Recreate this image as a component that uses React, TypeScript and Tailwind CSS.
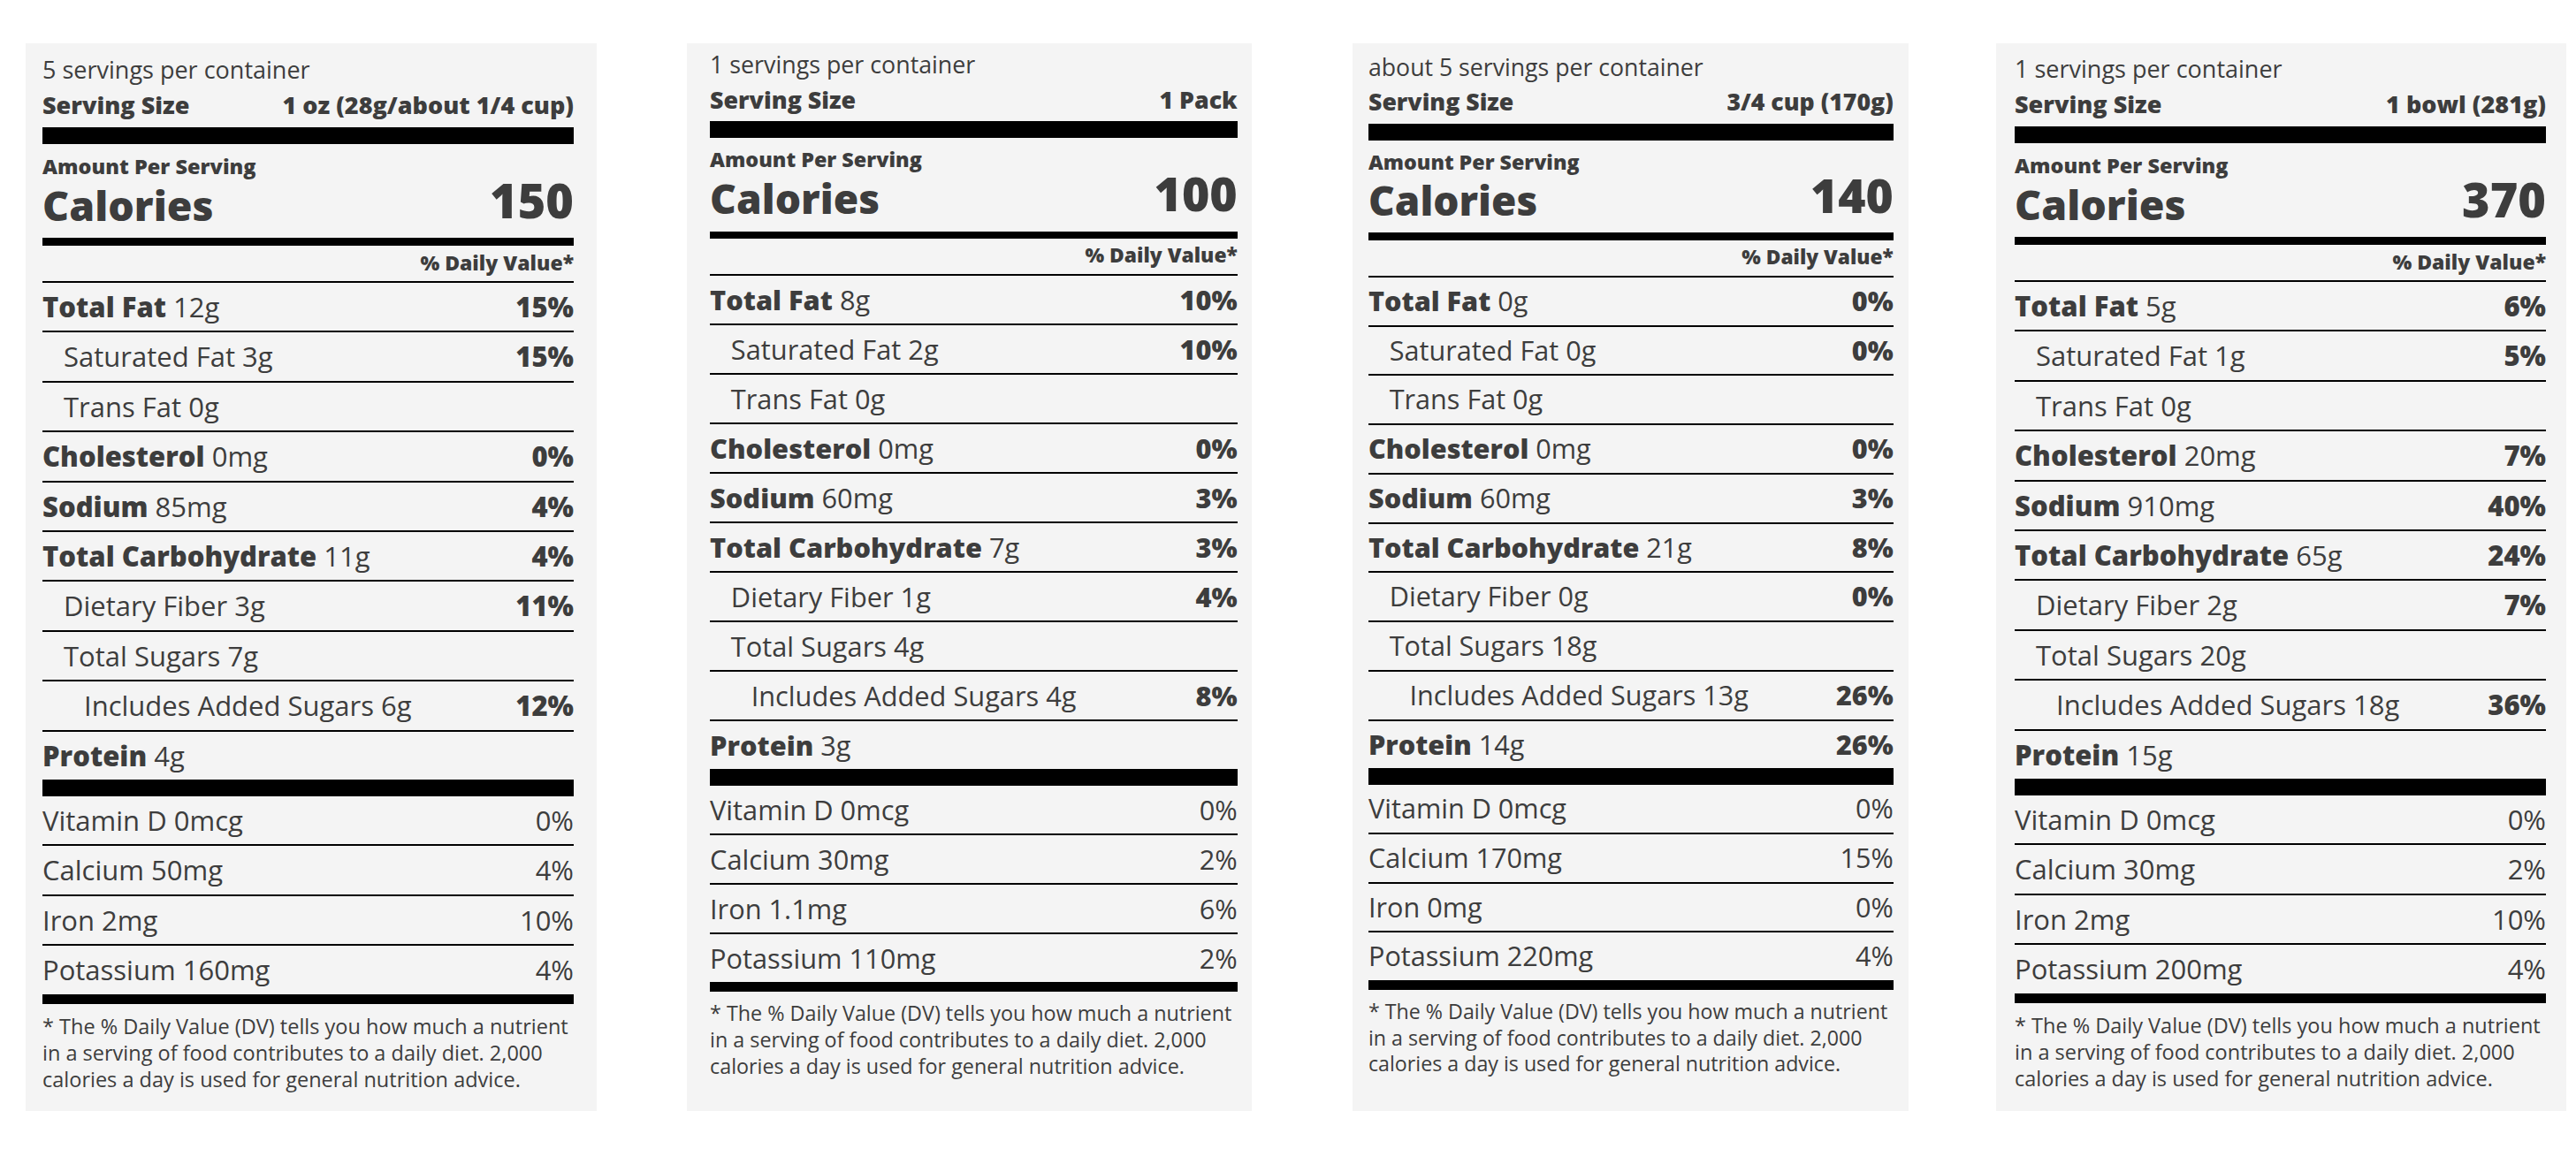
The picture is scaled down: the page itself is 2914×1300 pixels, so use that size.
type Row = {
  label: string;
  amount: string;
  dv?: string;
  bold?: boolean;
  indent?: 0 | 1 | 2;
};

interface LabelData {
  servings: string;
  size: string;
  calories: string;
  rows: Row[];
  minerals: { label: string; dv: string }[];
}

const labels: LabelData[] = [
  {
    servings: "5 servings per container",
    size: "1 oz (28g/about 1/4 cup)",
    calories: "150",
    rows: [
      { label: "Total Fat", amount: "12g", dv: "15%", bold: true },
      { label: "Saturated Fat", amount: "3g", dv: "15%", indent: 1 },
      { label: "Trans Fat", amount: "0g", indent: 1 },
      { label: "Cholesterol", amount: "0mg", dv: "0%", bold: true },
      { label: "Sodium", amount: "85mg", dv: "4%", bold: true },
      { label: "Total Carbohydrate", amount: "11g", dv: "4%", bold: true },
      { label: "Dietary Fiber", amount: "3g", dv: "11%", indent: 1 },
      { label: "Total Sugars", amount: "7g", indent: 1 },
      { label: "Includes Added Sugars", amount: "6g", dv: "12%", indent: 2 },
      { label: "Protein", amount: "4g", bold: true },
    ],
    minerals: [
      { label: "Vitamin D 0mcg", dv: "0%" },
      { label: "Calcium 50mg", dv: "4%" },
      { label: "Iron 2mg", dv: "10%" },
      { label: "Potassium 160mg", dv: "4%" },
    ],
  },
  {
    servings: "1 servings per container",
    size: "1 Pack",
    calories: "100",
    rows: [
      { label: "Total Fat", amount: "8g", dv: "10%", bold: true },
      { label: "Saturated Fat", amount: "2g", dv: "10%", indent: 1 },
      { label: "Trans Fat", amount: "0g", indent: 1 },
      { label: "Cholesterol", amount: "0mg", dv: "0%", bold: true },
      { label: "Sodium", amount: "60mg", dv: "3%", bold: true },
      { label: "Total Carbohydrate", amount: "7g", dv: "3%", bold: true },
      { label: "Dietary Fiber", amount: "1g", dv: "4%", indent: 1 },
      { label: "Total Sugars", amount: "4g", indent: 1 },
      { label: "Includes Added Sugars", amount: "4g", dv: "8%", indent: 2 },
      { label: "Protein", amount: "3g", bold: true },
    ],
    minerals: [
      { label: "Vitamin D 0mcg", dv: "0%" },
      { label: "Calcium 30mg", dv: "2%" },
      { label: "Iron 1.1mg", dv: "6%" },
      { label: "Potassium 110mg", dv: "2%" },
    ],
  },
  {
    servings: "about 5 servings per container",
    size: "3/4 cup (170g)",
    calories: "140",
    rows: [
      { label: "Total Fat", amount: "0g", dv: "0%", bold: true },
      { label: "Saturated Fat", amount: "0g", dv: "0%", indent: 1 },
      { label: "Trans Fat", amount: "0g", indent: 1 },
      { label: "Cholesterol", amount: "0mg", dv: "0%", bold: true },
      { label: "Sodium", amount: "60mg", dv: "3%", bold: true },
      { label: "Total Carbohydrate", amount: "21g", dv: "8%", bold: true },
      { label: "Dietary Fiber", amount: "0g", dv: "0%", indent: 1 },
      { label: "Total Sugars", amount: "18g", indent: 1 },
      { label: "Includes Added Sugars", amount: "13g", dv: "26%", indent: 2 },
      { label: "Protein", amount: "14g", dv: "26%", bold: true },
    ],
    minerals: [
      { label: "Vitamin D 0mcg", dv: "0%" },
      { label: "Calcium 170mg", dv: "15%" },
      { label: "Iron 0mg", dv: "0%" },
      { label: "Potassium 220mg", dv: "4%" },
    ],
  },
  {
    servings: "1 servings per container",
    size: "1 bowl (281g)",
    calories: "370",
    rows: [
      { label: "Total Fat", amount: "5g", dv: "6%", bold: true },
      { label: "Saturated Fat", amount: "1g", dv: "5%", indent: 1 },
      { label: "Trans Fat", amount: "0g", indent: 1 },
      { label: "Cholesterol", amount: "20mg", dv: "7%", bold: true },
      { label: "Sodium", amount: "910mg", dv: "40%", bold: true },
      { label: "Total Carbohydrate", amount: "65g", dv: "24%", bold: true },
      { label: "Dietary Fiber", amount: "2g", dv: "7%", indent: 1 },
      { label: "Total Sugars", amount: "20g", indent: 1 },
      { label: "Includes Added Sugars", amount: "18g", dv: "36%", indent: 2 },
      { label: "Protein", amount: "15g", bold: true },
    ],
    minerals: [
      { label: "Vitamin D 0mcg", dv: "0%" },
      { label: "Calcium 30mg", dv: "2%" },
      { label: "Iron 2mg", dv: "10%" },
      { label: "Potassium 200mg", dv: "4%" },
    ],
  },
];

const indentClass = ["pl-0", "pl-[24px]", "pl-[47px]"];

const NutritionLabel = ({
  data,
  outer,
  inner,
}: {
  data: LabelData;
  outer: string;
  inner: string;
}) => {
  return (
    <div className={`h-[1208px] shrink-0 bg-[#f4f4f4] ${outer}`}>
      <div className={`w-[601px] ${inner}`}>
        <p className="text-[27px] leading-[36px]">{data.servings}</p>
        <div className="mt-[6px] flex justify-between text-[27px] font-extrabold leading-[32px]">
          <span>Serving Size</span>
          <span>{data.size}</span>
        </div>
        <div className="mt-[9px] h-[19px] bg-black" />
        <p className="mt-[13px] text-[23.5px] font-extrabold leading-[24px]">Amount Per Serving</p>
        <div className="flex items-end justify-between font-extrabold">
          <span className="text-[46.5px] leading-[40px]">Calories</span>
          <span className="text-[54px] leading-[52px]">{data.calories}</span>
        </div>
        <div className="mt-[17px] h-[9px] bg-black" />
        <p className="mt-[5px] border-b-[2.1px] border-black pb-[7px] text-right text-[23px] font-extrabold leading-[28px]">
          % Daily Value*
        </p>

        {data.rows.map((row, i) => (
          <div
            key={row.label}
            className={`flex justify-between text-[31px] leading-[54.4px] ${
              i < data.rows.length - 1 ? "border-b-[2.1px] border-black" : ""
            }`}
          >
            <span className={indentClass[row.indent ?? 0]}>
              {row.bold ? <span className="font-extrabold">{row.label}</span> : row.label} {row.amount}
            </span>
            {row.dv && <span className="font-extrabold">{row.dv}</span>}
          </div>
        ))}

        <div className="h-[19px] bg-black" />

        {data.minerals.map((m, i) => (
          <div
            key={m.label}
            className={`flex justify-between text-[31px] leading-[54.4px] ${
              i < data.minerals.length - 1 ? "border-b-[2.1px] border-black" : ""
            }`}
          >
            <span>{m.label}</span>
            <span>{m.dv}</span>
          </div>
        ))}

        <div className="h-[11px] bg-black" />
        <p className="mt-[10px] text-[23.5px] leading-[30px]">
          * The % Daily Value (DV) tells you how much a nutrient in a serving of food contributes to a
          daily diet. 2,000 calories a day is used for general nutrition advice.
        </p>
      </div>
    </div>
  );
};

export default function App() {
  return (
    <div className="min-h-[1300px] w-[2914px] bg-white font-['Open_Sans',sans-serif] text-[#3d3d3d]">
      <div className="flex items-start pt-[49px]">
        <NutritionLabel
          data={labels[0]}
          outer="ml-[29px] w-[646px] pl-[19px] pt-[12px]"
          inner=""
        />
        <NutritionLabel
          data={labels[1]}
          outer="ml-[102px] w-[639px] pl-[26px] pt-[6px]"
          inner="[zoom:0.993]"
        />
        <NutritionLabel
          data={labels[2]}
          outer="ml-[114px] w-[629px] pl-[18px] pt-[9px]"
          inner="[zoom:0.988]"
        />
        <NutritionLabel
          data={labels[3]}
          outer="ml-[99px] w-[645px] pl-[21px] pt-[11px]"
          inner=""
        />
      </div>
    </div>
  );
}
